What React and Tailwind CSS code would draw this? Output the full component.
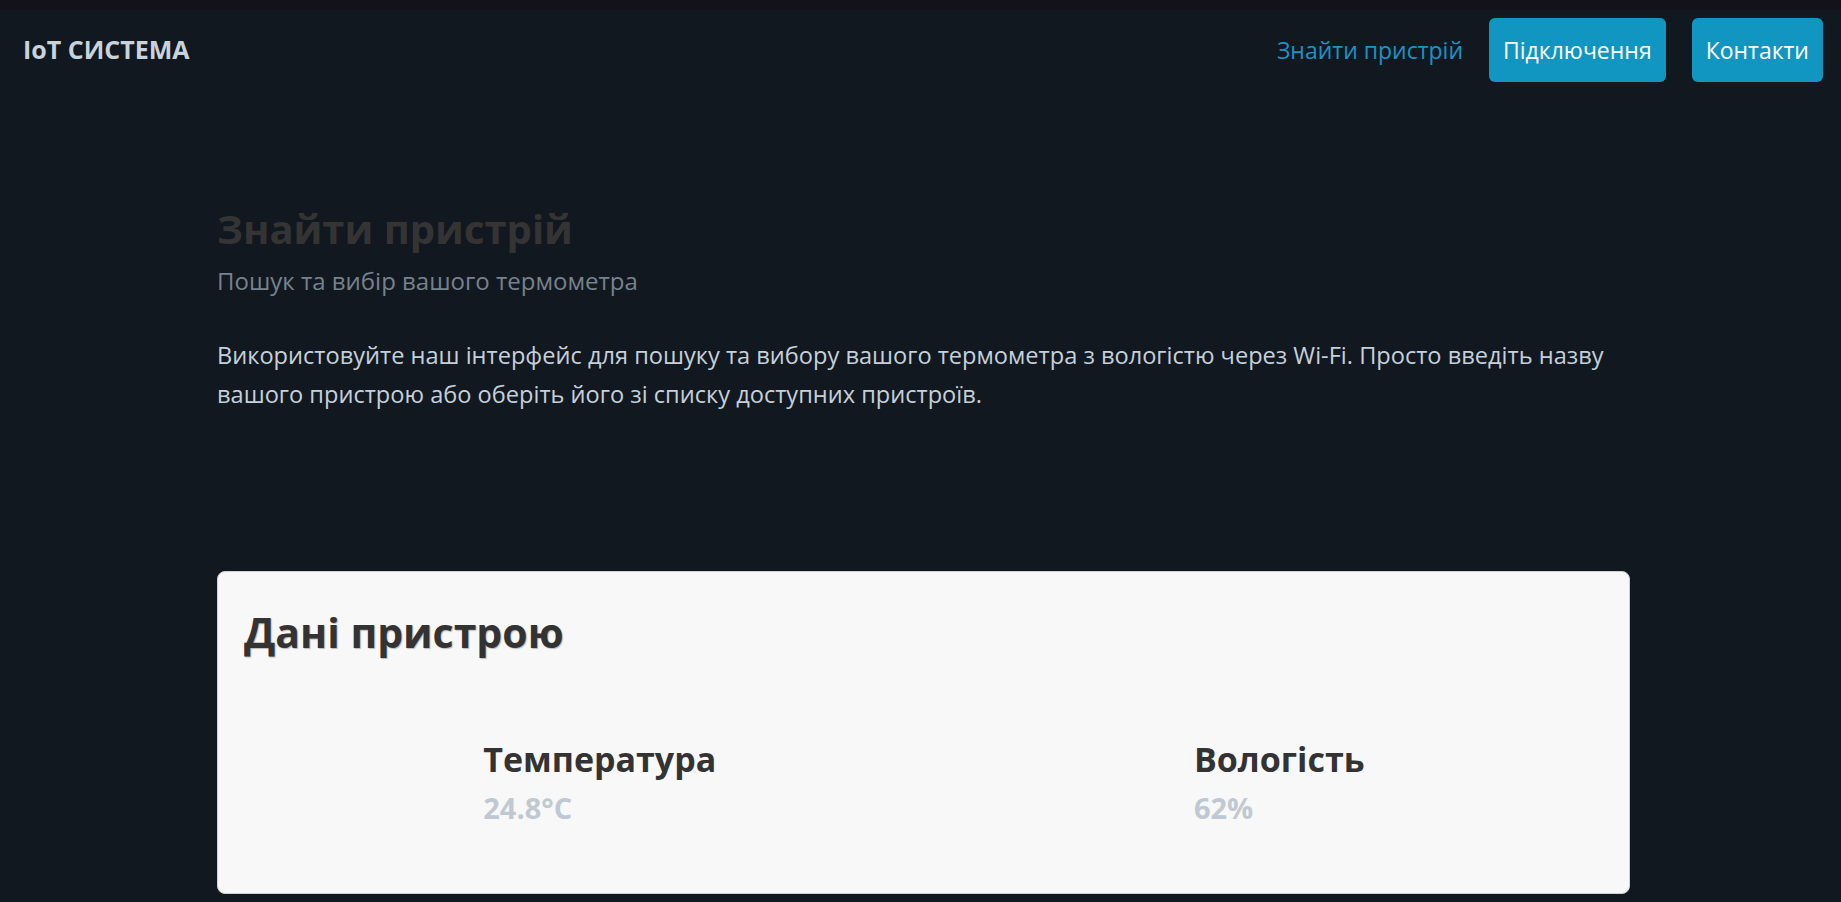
import React from "react";

const font = { fontFamily: '"Open Sans", "Noto Sans", sans-serif' };

const Reading = ({ label, value }) => (
  <div className="flex justify-center pl-8">
    <div>
      <h3 className="text-[34px] font-bold leading-[1.2] text-[#333333]">{label}</h3>
      <p className="mt-[12px] text-[29px] font-bold leading-[1.2] text-[#c0c9d1]">{value}</p>
    </div>
  </div>
);

const App = () => {
  return (
    <div className="min-h-screen bg-[#12181f]" style={font}>
      <div className="h-[10px] bg-[#13121a]" />
      <header className="flex h-[80px] items-center justify-between pl-[23px] pr-[18px]">
        <span className="text-[25px] font-bold text-[#c9d3dc]">IoT СИСТЕМА</span>
        <nav className="flex items-center gap-[26px]">
          <a className="text-[23px] text-[#1a93c6]">Знайти пристрій</a>
          <button className="h-[64px] rounded-[6px] bg-[#1196c1] px-[14px] text-[23px] text-white">
            Підключення
          </button>
          <button className="h-[64px] rounded-[6px] bg-[#1196c1] px-[14px] text-[23px] text-white">
            Контакти
          </button>
        </nav>
      </header>

      <main className="ml-[217px] w-[1413px] pt-[115px]">
        <h1 className="text-[40px] font-bold leading-[48px] text-[#343434]">Знайти пристрій</h1>
        <p className="mt-[10px] text-[24px] leading-[36px] text-[#76828d]">
          Пошук та вибір вашого термометра
        </p>
        <p className="mt-[37px] text-[23.6px] leading-[38.7px] text-[#c5d0db]">
          Використовуйте наш інтерфейс для пошуку та вибору вашого термометра з вологістю через
          Wi-Fi. Просто введіть назву вашого пристрою або оберіть його зі списку доступних
          пристроїв.
        </p>

        <section className="mt-[158px] h-[323px] rounded-[8px] border border-[#cfcfcf] bg-[#f8f8f8] px-[26px] pt-[36px]">
          <h2 className="text-[41px] font-bold leading-[1.2] text-[#333333] [text-shadow:1px_1px_1px_rgba(0,0,0,0.25)]">
            Дані пристрою
          </h2>
          <div className="mt-[81px] grid grid-cols-2">
            <Reading label="Температура" value="24.8°C" />
            <Reading label="Вологість" value="62%" />
          </div>
        </section>
      </main>
    </div>
  );
};

export default App;
